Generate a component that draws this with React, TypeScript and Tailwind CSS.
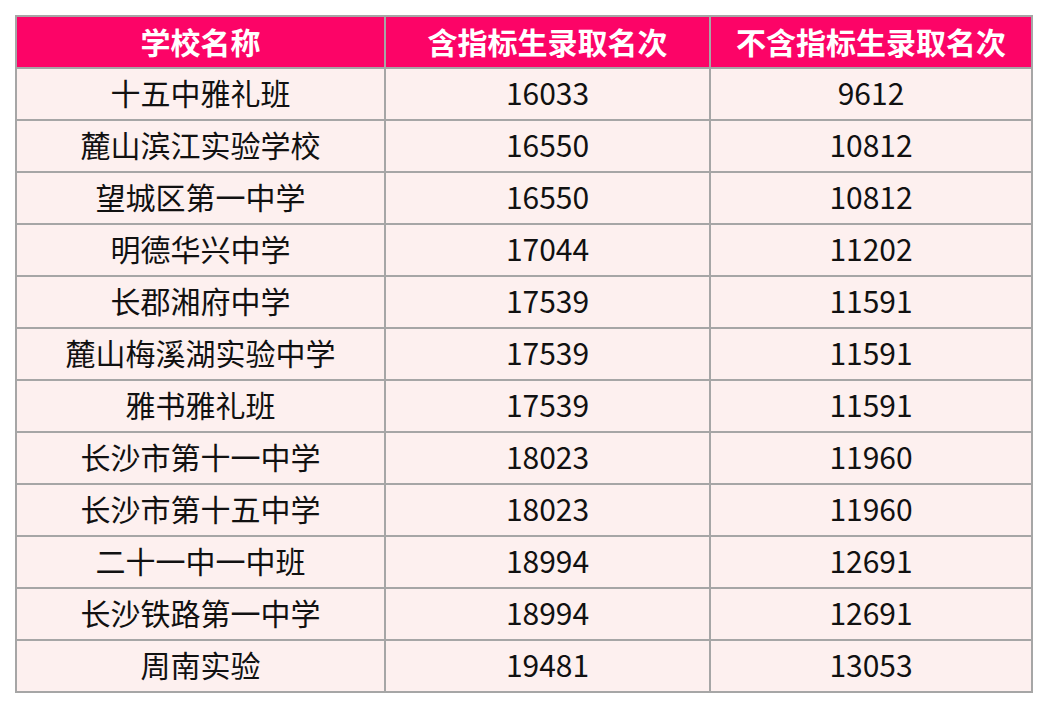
const rows: [string, string, string][] = [
  ['十五中雅礼班', '16033', '9612'],
  ['麓山滨江实验学校', '16550', '10812'],
  ['望城区第一中学', '16550', '10812'],
  ['明德华兴中学', '17044', '11202'],
  ['长郡湘府中学', '17539', '11591'],
  ['麓山梅溪湖实验中学', '17539', '11591'],
  ['雅书雅礼班', '17539', '11591'],
  ['长沙市第十一中学', '18023', '11960'],
  ['长沙市第十五中学', '18023', '11960'],
  ['二十一中一中班', '18994', '12691'],
  ['长沙铁路第一中学', '18994', '12691'],
  ['周南实验', '19481', '13053'],
];

const headers = ['学校名称', '含指标生录取名次', '不含指标生录取名次'];

export default function App() {
  return (
    <div
      className="w-[1048px] h-[708px] bg-white pt-[15px] pl-[15px]"
      style={{ fontFamily: '"Noto Sans CJK SC", "Noto Sans", sans-serif' }}
    >
      <table className="w-[1018px] table-fixed border-collapse border-2 border-[#a6a6a6]">
        <colgroup>
          <col className="w-[369px]" />
          <col className="w-[325px]" />
          <col />
        </colgroup>
        <thead>
          <tr className="bg-[#fc0467]">
            {headers.map((h) => (
              <th
                key={h}
                className="h-[52px] border-2 border-[#a6a6a6] pb-[2px] text-center align-middle text-[30px] font-bold leading-none text-white"
              >
                {h}
              </th>
            ))}
          </tr>
        </thead>
        <tbody>
          {rows.map((r) => (
            <tr key={r[0]} className="bg-[#fdf0ef]">
              {r.map((c, i) => (
                <td
                  key={i}
                  className="h-[52px] border-2 border-[#a6a6a6] pb-[4px] text-center align-middle text-[30px] leading-none text-[#111]"
                >
                  {c}
                </td>
              ))}
            </tr>
          ))}
        </tbody>
      </table>
    </div>
  );
}
